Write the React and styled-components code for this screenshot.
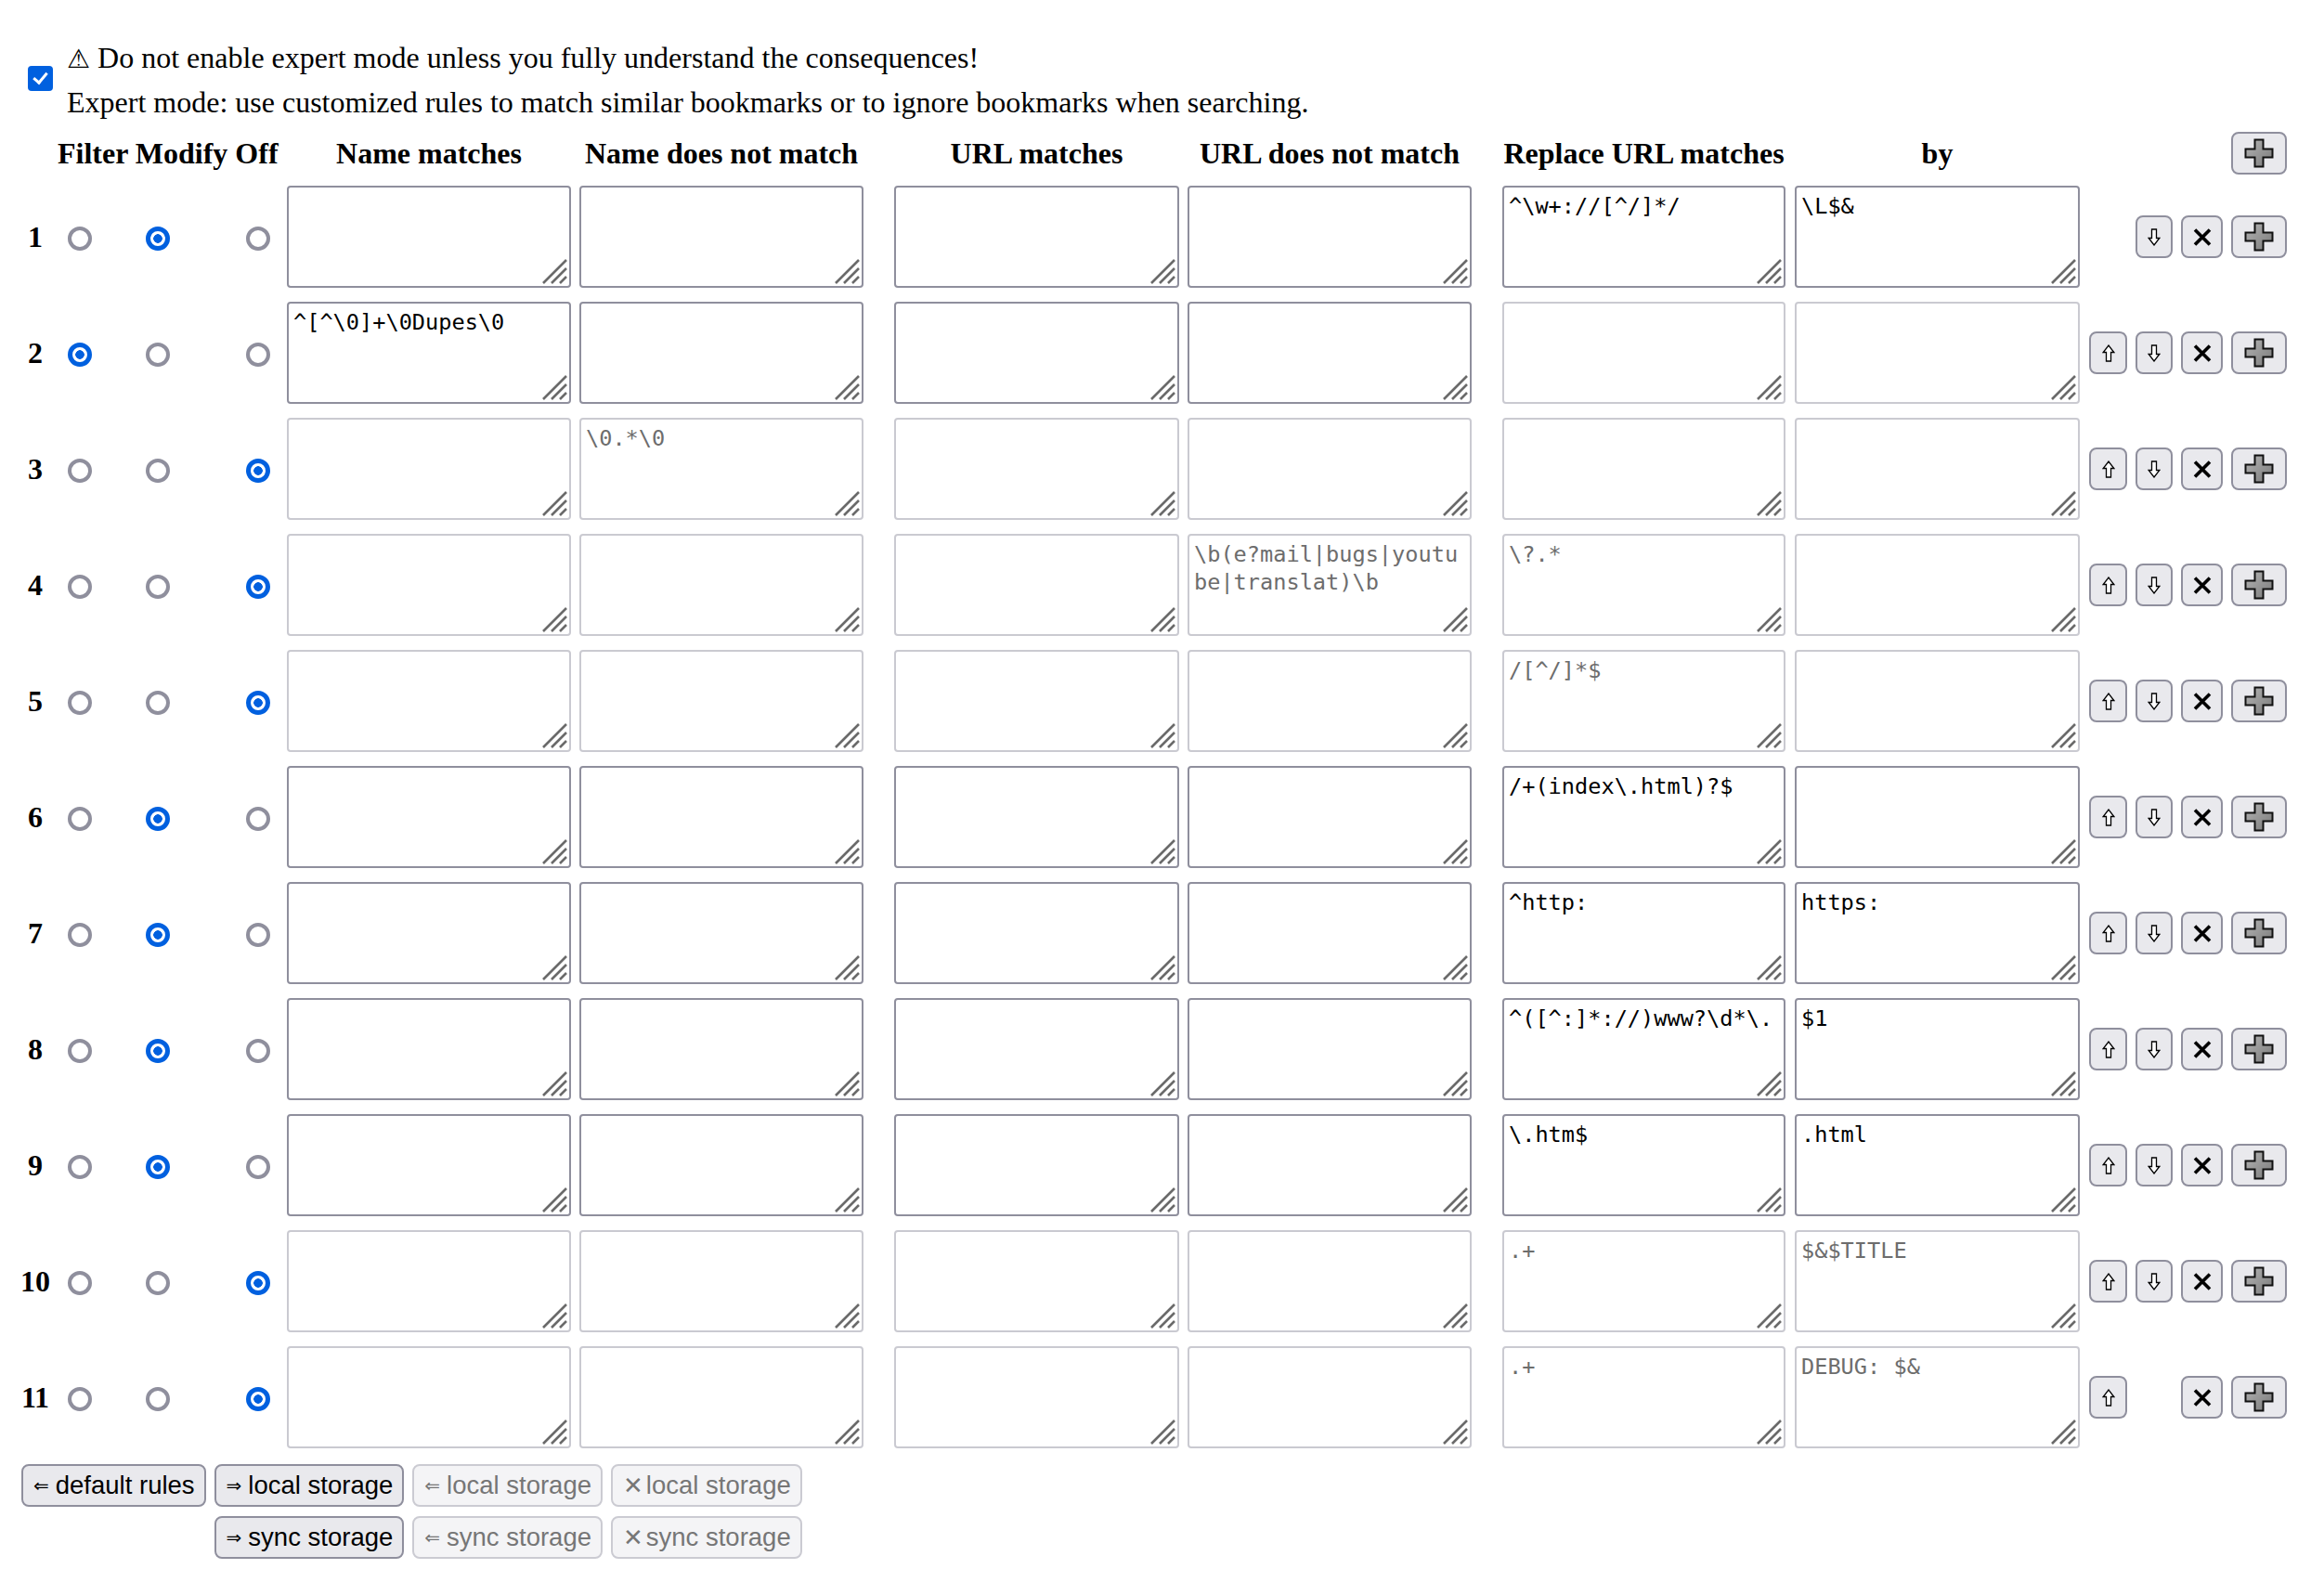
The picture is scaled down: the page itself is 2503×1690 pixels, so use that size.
import React from 'react';
import styled, { createGlobalStyle, css } from 'styled-components';

const GlobalStyle = createGlobalStyle`
  html, body {
    margin: 0;
    padding: 0;
    background: #fff;
  }
  body {
    font-family: "Liberation Serif", "Times New Roman", serif;
    font-size: 32px;
    color: #000;
  }
`;

const Page = styled.div`
  padding: 39px 0 0 14px;
`;

const Intro = styled.div`
  display: flex;
  align-items: center;
  padding-left: 16px;
`;

const Check = styled.input.attrs({ type: 'checkbox' })`
  appearance: none;
  position: relative;
  flex: none;
  width: 27px;
  height: 27px;
  margin: 0 15px 4px 0;
  border-radius: 4px;
  background: #0060df;
  &::after {
    content: '';
    position: absolute;
    left: 9px;
    top: 4px;
    width: 6px;
    height: 12px;
    border: solid #fff;
    border-width: 0 3px 3px 0;
    transform: rotate(40deg);
  }
`;

const IntroText = styled.div`
  line-height: 47px;
  white-space: nowrap;
`;

const Warn = styled.span`
  font-family: "DejaVu Sans", sans-serif;
  font-size: 28px;
`;

const Rules = styled.div`
  display: grid;
  grid-template-columns: 48px 48px 120px 79px 315px 339px 316px 339px 315px 317px 213px;
  grid-template-rows: 40px;
  grid-auto-rows: 110px;
  row-gap: 15px;
  align-items: center;
  margin-top: 11px;
`;

const HeadLabel = styled.div`
  grid-column: ${p => p.$span ? `span ${p.$span}` : 'auto'};
  width: ${p => p.$width || 'auto'};
  text-align: ${p => p.$align || 'center'};
  font-weight: bold;
  white-space: nowrap;
`;

const Num = styled.div`
  text-align: center;
  font-weight: bold;
`;

const RadioCell = styled.div`
  display: flex;
  justify-content: ${p => p.$pad ? 'flex-start' : 'center'};
  padding-left: ${p => p.$pad || 0}px;
`;

const Radio = styled.input.attrs({ type: 'radio' })`
  appearance: none;
  box-sizing: border-box;
  width: 26px;
  height: 26px;
  margin: 4px 0 0;
  border-radius: 50%;
  border: 4px solid #8f8f9d;
  background: #fff;
  &:checked {
    border: 5px solid #0060df;
    background: radial-gradient(circle, #0060df 0 4.5px, #fff 5px);
  }
`;

const FieldBox = styled.div`
  position: relative;
  width: ${p => p.$width || 306}px;
  height: 110px;
`;

const Field = styled.textarea`
  box-sizing: border-box;
  display: block;
  width: 100%;
  height: 100%;
  margin: 0;
  padding: 5px 5px 4px;
  border: 2px solid #8f8f9d;
  border-radius: 4px;
  font-family: "DejaVu Sans Mono", "Liberation Mono", monospace;
  font-size: 23.6px;
  line-height: 30px;
  color: #000;
  background: #fff;
  resize: none;
  overflow: hidden;
  white-space: pre-wrap;
  word-break: break-all;
  outline: none;
  &:disabled {
    border-color: #cacad1;
    color: #6d6d6d;
    background: #fff;
    -webkit-text-fill-color: #6d6d6d;
  }
`;

const Grip = styled.svg`
  position: absolute;
  right: 4px;
  bottom: 4px;
  width: 28px;
  height: 28px;
  pointer-events: none;
`;

const ButtonBase = css`
  box-sizing: border-box;
  margin: 0;
  border: 2px solid #8f8f9d;
  border-radius: 8px;
  background: #e9e9ed;
  color: #000;
  font-family: "Liberation Sans", Arial, sans-serif;
  ${p => p.disabled && css`
    border-color: #cbcbd2;
    background: #f4f4f6;
    color: #767676;
  `}
`;

const Tools = styled.div`
  display: flex;
  gap: 9px;
  justify-content: ${p => p.$end ? 'flex-end' : 'flex-start'};
`;

const ToolButton = styled.button`
  ${ButtonBase}
  display: flex;
  align-items: center;
  justify-content: center;
  width: ${p => p.$w}px;
  height: 46px;
  padding: 0;
  visibility: ${p => p.$hidden ? 'hidden' : 'visible'};
`;

const Storage = styled.div`
  display: grid;
  grid-template-columns: repeat(4, max-content);
  column-gap: 9px;
  row-gap: 10px;
  margin: 17px 0 0 9px;
`;

const StoreButton = styled.button`
  ${ButtonBase}
  grid-column: ${p => p.$col || 'auto'};
  height: 46px;
  padding: 0 10px 0 11px;
  font-size: 27.5px;
  white-space: nowrap;
`;

const Arrow = styled.span`
  position: relative;
  top: ${p => p.$lift ? -2 : 0}px;
  font-family: "DejaVu Sans", sans-serif;
  font-size: ${p => p.$size || 20}px;
  margin-right: ${p => p.$gap || 7}px;
`;

const Up = () => (
  <svg width="14" height="19" viewBox="0 0 14 19">
    <path d="M4.5 18 H9.5 V8.5 H12.8 L7 1 L1.2 8.5 H4.5 Z" fill="#fff" stroke="#000" strokeWidth="1.3" strokeLinejoin="miter" />
  </svg>
);

const Down = () => (
  <svg width="14" height="19" viewBox="0 0 14 19">
    <path d="M4.5 1 H9.5 V10.5 H12.8 L7 18 L1.2 10.5 H4.5 Z" fill="#fff" stroke="#000" strokeWidth="1.3" strokeLinejoin="miter" />
  </svg>
);

const Cross = () => (
  <svg width="20" height="19" viewBox="0 0 20 19">
    <path d="M2 1.5 L18 17.5 M18 1.5 L2 17.5" stroke="#000" strokeWidth="3.6" />
  </svg>
);

const Plus = () => (
  <svg width="32" height="32" viewBox="0 0 32 32">
    <defs>
      <linearGradient id="plusFill" x1="0" y1="0" x2="1" y2="1">
        <stop offset="0" stopColor="#b4b4b4" />
        <stop offset="1" stopColor="#7a7a7a" />
      </linearGradient>
    </defs>
    <path d="M11.5 1.5 H20.5 V11.5 H30.5 V20.5 H20.5 V30.5 H11.5 V20.5 H1.5 V11.5 H11.5 Z" fill="url(#plusFill)" stroke="#111" strokeWidth="2" />
  </svg>
);

const RULES = [
  { mode: 'modify', replace: '^\\w+://[^/]*/', by: '\\L$&' },
  { mode: 'filter', name: '^[^\\0]+\\0Dupes\\0' },
  { mode: 'off', nameNot: '\\0.*\\0' },
  { mode: 'off', urlNot: '\\b(e?mail|bugs|youtube|translat)\\b', replace: '\\?.*' },
  { mode: 'off', replace: '/[^/]*$' },
  { mode: 'modify', replace: '/+(index\\.html)?$' },
  { mode: 'modify', replace: '^http:', by: 'https:' },
  { mode: 'modify', replace: '^([^:]*://)www?\\d*\\.', by: '$1' },
  { mode: 'modify', replace: '\\.htm$', by: '.html' },
  { mode: 'off', replace: '.+', by: '$&$TITLE' },
  { mode: 'off', replace: '.+', by: 'DEBUG: $&' },
];

const FIELDS = [
  { key: 'name', width: 306, title: 'Name matches' },
  { key: 'nameNot', width: 306, title: 'Name does not match' },
  { key: 'url', width: 307, title: 'URL matches' },
  { key: 'urlNot', width: 306, title: 'URL does not match' },
  { key: 'replace', width: 305, title: 'Replace URL matches', modifyOnly: true },
  { key: 'by', width: 307, title: 'by', modifyOnly: true },
];

const RuleField = ({ value, width, disabled }) => (
  <FieldBox $width={width}>
    <Field defaultValue={value || ''} disabled={disabled} spellCheck={false} />
    <Grip viewBox="0 0 28 28">
      <path d="M27 2 L2 27 M27 11 L11 27 M27 20 L20 27" stroke="#6a6a6a" strokeWidth="2.6" />
    </Grip>
  </FieldBox>
);

const RuleRow = ({ rule, index, last }) => {
  const isDisabled = f => rule.mode === 'off' || (f.modifyOnly && rule.mode !== 'modify');
  return (
    <>
      <Num>{index + 1}</Num>
      <RadioCell><Radio name={`mode${index}`} defaultChecked={rule.mode === 'filter'} /></RadioCell>
      <RadioCell><Radio name={`mode${index}`} defaultChecked={rule.mode === 'modify'} /></RadioCell>
      <RadioCell $pad={35}><Radio name={`mode${index}`} defaultChecked={rule.mode === 'off'} /></RadioCell>
      {FIELDS.map(f => (
        <RuleField key={f.key} value={rule[f.key]} width={f.width} disabled={isDisabled(f)} />
      ))}
      <Tools>
        <ToolButton $w={41} $hidden={index === 0}><Up /></ToolButton>
        <ToolButton $w={40} $hidden={last}><Down /></ToolButton>
        <ToolButton $w={45}><Cross /></ToolButton>
        <ToolButton $w={60}><Plus /></ToolButton>
      </Tools>
    </>
  );
};

export default function App() {
  return (
    <Page>
      <GlobalStyle />
      <Intro>
        <Check defaultChecked />
        <IntroText>
          <div><Warn>⚠</Warn> Do not enable expert mode unless you fully understand the consequences!</div>
          <div>Expert mode: use customized rules to match similar bookmarks or to ignore bookmarks when searching.</div>
        </IntroText>
      </Intro>

      <Rules>
        <div />
        <HeadLabel $span={3} $align="left">Filter Modify Off</HeadLabel>
        {FIELDS.map(f => (
          <HeadLabel key={f.key} $width={`${f.width}px`}>{f.title}</HeadLabel>
        ))}
        <Tools $end>
          <ToolButton $w={60}><Plus /></ToolButton>
        </Tools>
        {RULES.map((rule, i) => (
          <RuleRow key={i} rule={rule} index={i} last={i === RULES.length - 1} />
        ))}
      </Rules>

      <Storage>
        <StoreButton><Arrow $lift>⇐</Arrow>default rules</StoreButton>
        <StoreButton><Arrow $lift>⇒</Arrow>local storage</StoreButton>
        <StoreButton disabled><Arrow $lift>⇐</Arrow>local storage</StoreButton>
        <StoreButton disabled><Arrow $size={26} $gap={3}>✕</Arrow>local storage</StoreButton>
        <StoreButton $col={2}><Arrow $lift>⇒</Arrow>sync storage</StoreButton>
        <StoreButton disabled><Arrow $lift>⇐</Arrow>sync storage</StoreButton>
        <StoreButton disabled><Arrow $size={26} $gap={3}>✕</Arrow>sync storage</StoreButton>
      </Storage>
    </Page>
  );
}
